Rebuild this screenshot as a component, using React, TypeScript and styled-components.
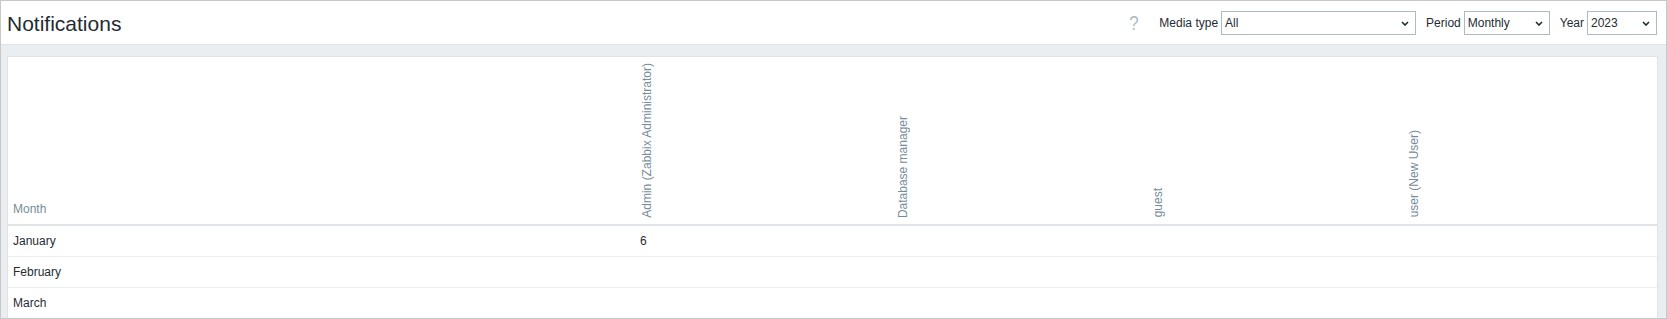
import React from "react";
import styled, { createGlobalStyle } from "styled-components";

const GlobalStyle = createGlobalStyle`
  html, body {
    margin: 0;
    padding: 0;
    background: #ffffff;
  }
  body {
    font-family: "Liberation Sans", Arial, sans-serif;
    font-size: 12px;
    color: #1f2c33;
  }
  * { box-sizing: border-box; }
`;

const Frame = styled.div`
  width: 1667px;
  height: 319px;
  border: 1px solid #c8c8c8;
  background: #ebeef0;
  overflow: hidden;
  display: flex;
  flex-direction: column;
`;

const Header = styled.header`
  flex: 0 0 auto;
  height: 44px;
  background: #ffffff;
  border-bottom: 1px solid #dfe4e7;
  display: flex;
  align-items: center;
  justify-content: space-between;
  padding: 0 9px 0 6px;
`;

const Title = styled.h1`
  margin: 2px 0 0 0;
  font-size: 21px;
  line-height: 24px;
  font-weight: normal;
  color: #1f2c33;
`;

const Controls = styled.div`
  display: flex;
  align-items: center;
  margin-top: 1px;
`;

const HelpIcon = styled.span`
  font-size: 21px;
  line-height: 24px;
  color: #acbbc2;
  margin-right: 20px;
  transform: scaleX(0.8);
`;

const FilterItem = styled.label<{ $first?: boolean }>`
  display: flex;
  align-items: center;
  gap: 3px;
  margin-left: ${(p) => (p.$first ? "0" : "10px")};
  font-size: 12px;
  color: #1f2c33;
`;

const SelectBox = styled.div<{ $w: number }>`
  position: relative;
  width: ${(p) => p.$w}px;
  height: 24px;
  border: 1px solid #acbbc2;
  background: #ffffff;
  display: flex;
  align-items: center;
  padding-left: 3px;
  font-size: 12px;
  color: #1f2c33;
`;

const Chevron = styled.svg`
  position: absolute;
  right: 6px;
  top: 9px;
`;

const Main = styled.main`
  flex: 1 1 auto;
  padding: 11px 8px 0 6px;
`;

const Card = styled.section`
  background: #ffffff;
  border: 1px solid #dfe4e7;
  border-bottom: none;
  height: 100%;
`;

const Table = styled.table`
  width: 100%;
  border-collapse: collapse;
  table-layout: fixed;
`;

const Th = styled.th<{ $raised?: boolean }>`
  padding: 6px 5px ${(p) => (p.$raised ? "8px" : "6px")};
  vertical-align: bottom;
  text-align: left;
  font-weight: normal;
  font-size: 12px;
  line-height: 14px;
  color: #768d99;
  border-bottom: 2px solid #dfe4e7;
`;

const Vertical = styled.span`
  display: block;
  width: 14px;
  writing-mode: vertical-rl;
  transform: rotate(180deg);
  white-space: nowrap;
  line-height: 14px;
`;

const Tr = styled.tr`
  border-bottom: 1px solid #ebeef0;
`;

const Td = styled.td`
  padding: 8px 5px;
  font-size: 12px;
  line-height: 14px;
  color: #1f2c33;
  white-space: nowrap;
`;

const Select = ({ width, value }: { width: number; value: string }) => (
  <SelectBox $w={width}>
    {value}
    <Chevron width="8" height="5" viewBox="0 0 8 5">
      <polyline
        points="1,1 4,4 7,1"
        fill="none"
        stroke="#1f2c33"
        strokeWidth="1.6"
      />
    </Chevron>
  </SelectBox>
);

const users = [
  "Admin (Zabbix Administrator)",
  "Database manager",
  "guest",
  "user (New User)",
];

const rows: { month: string; values: (number | null)[] }[] = [
  { month: "January", values: [6, null, null, null] },
  { month: "February", values: [null, null, null, null] },
  { month: "March", values: [null, null, null, null] },
];

export default function App() {
  return (
    <>
      <GlobalStyle />
      <Frame>
        <Header>
          <Title>Notifications</Title>
          <Controls>
            <HelpIcon>?</HelpIcon>
            <FilterItem $first>
              Media type
              <Select width={195} value="All" />
            </FilterItem>
            <FilterItem>
              Period
              <Select width={86} value="Monthly" />
            </FilterItem>
            <FilterItem>
              Year
              <Select width={70} value="2023" />
            </FilterItem>
          </Controls>
        </Header>
        <Main>
          <Card>
            <Table>
              <colgroup>
                <col style={{ width: 627 }} />
                {users.map((u) => (
                  <col key={u} />
                ))}
              </colgroup>
              <thead>
                <tr>
                  <Th $raised>Month</Th>
                  {users.map((u) => (
                    <Th key={u}>
                      <Vertical>{u}</Vertical>
                    </Th>
                  ))}
                </tr>
              </thead>
              <tbody>
                {rows.map((r) => (
                  <Tr key={r.month}>
                    <Td>{r.month}</Td>
                    {r.values.map((v, i) => (
                      <Td key={i}>{v ?? ""}</Td>
                    ))}
                  </Tr>
                ))}
              </tbody>
            </Table>
          </Card>
        </Main>
      </Frame>
    </>
  );
}
